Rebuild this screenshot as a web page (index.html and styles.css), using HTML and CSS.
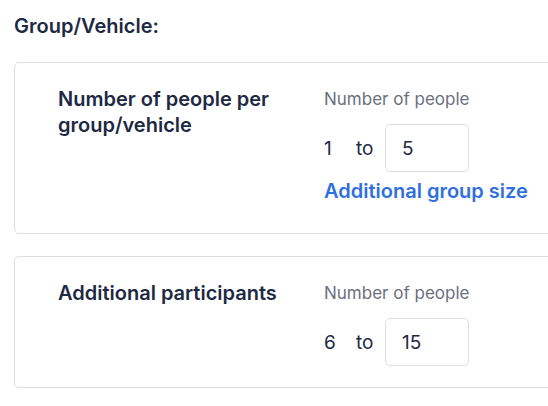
FILE: index.html
```html
<!DOCTYPE html>
<html>
<head>
<meta charset="utf-8">
<link rel="stylesheet" href="styles.css">
</head>
<body>
<div class="page">
  <h2 class="section-title">Group/Vehicle:</h2>
  <div class="card">
    <div class="card-label">Number of people per group/vehicle</div>
    <div class="card-fields">
      <div class="field-caption">Number of people</div>
      <div class="range-row">
        <span class="range-from">1</span>
        <span class="range-to">to</span>
        <div class="range-input">5</div>
      </div>
      <a class="link" href="#">Additional group size</a>
    </div>
  </div>
  <div class="card card-second">
    <div class="card-label">Additional participants</div>
    <div class="card-fields">
      <div class="field-caption">Number of people</div>
      <div class="range-row">
        <span class="range-from">6</span>
        <span class="range-to">to</span>
        <div class="range-input">15</div>
      </div>
    </div>
  </div>
</div>
</body>
</html>
```
FILE: styles.css
```css
html, body {
  margin: 0;
  padding: 0;
  overflow: hidden;
  background: #ffffff;
}
body {
  font-family: Inter, Lato, sans-serif;
  color: #1e2943;
}
.page {
  padding: 14px 0 0 14px;
  width: 620px;
}
.section-title {
  margin: 0 0 24px 0;
  font-size: 20px;
  line-height: 24px;
  font-weight: 600;
}
.card {
  display: flex;
  border: 1px solid #dedfe4;
  border-radius: 5px;
  padding: 23px 0 21px 43px;
  margin-bottom: 22px;
}
.card-label {
  width: 240px;
  margin-right: 26px;
  font-size: 20px;
  line-height: 26px;
  font-weight: 600;
}
.card-fields {
  display: flex;
  flex-direction: column;
}
.field-caption {
  padding-top: 1px;
  font-size: 17px;
  line-height: 24px;
  color: #6b6f80;
  margin-bottom: 13px;
}
.range-row {
  display: flex;
  align-items: center;
  font-size: 19px;
}
.range-from {
  width: 32px;
}
.range-to {
  width: 29px;
}
.range-input {
  box-sizing: border-box;
  width: 84px;
  height: 48px;
  border: 1px solid #dedfe4;
  border-radius: 5px;
  padding-left: 16px;
  display: flex;
  align-items: center;
}
.link {
  margin-top: 7px;
  margin-bottom: 9px;
  font-size: 20px;
  line-height: 24px;
  font-weight: 600;
  color: #2f6fe0;
  text-decoration: none;
}
```
